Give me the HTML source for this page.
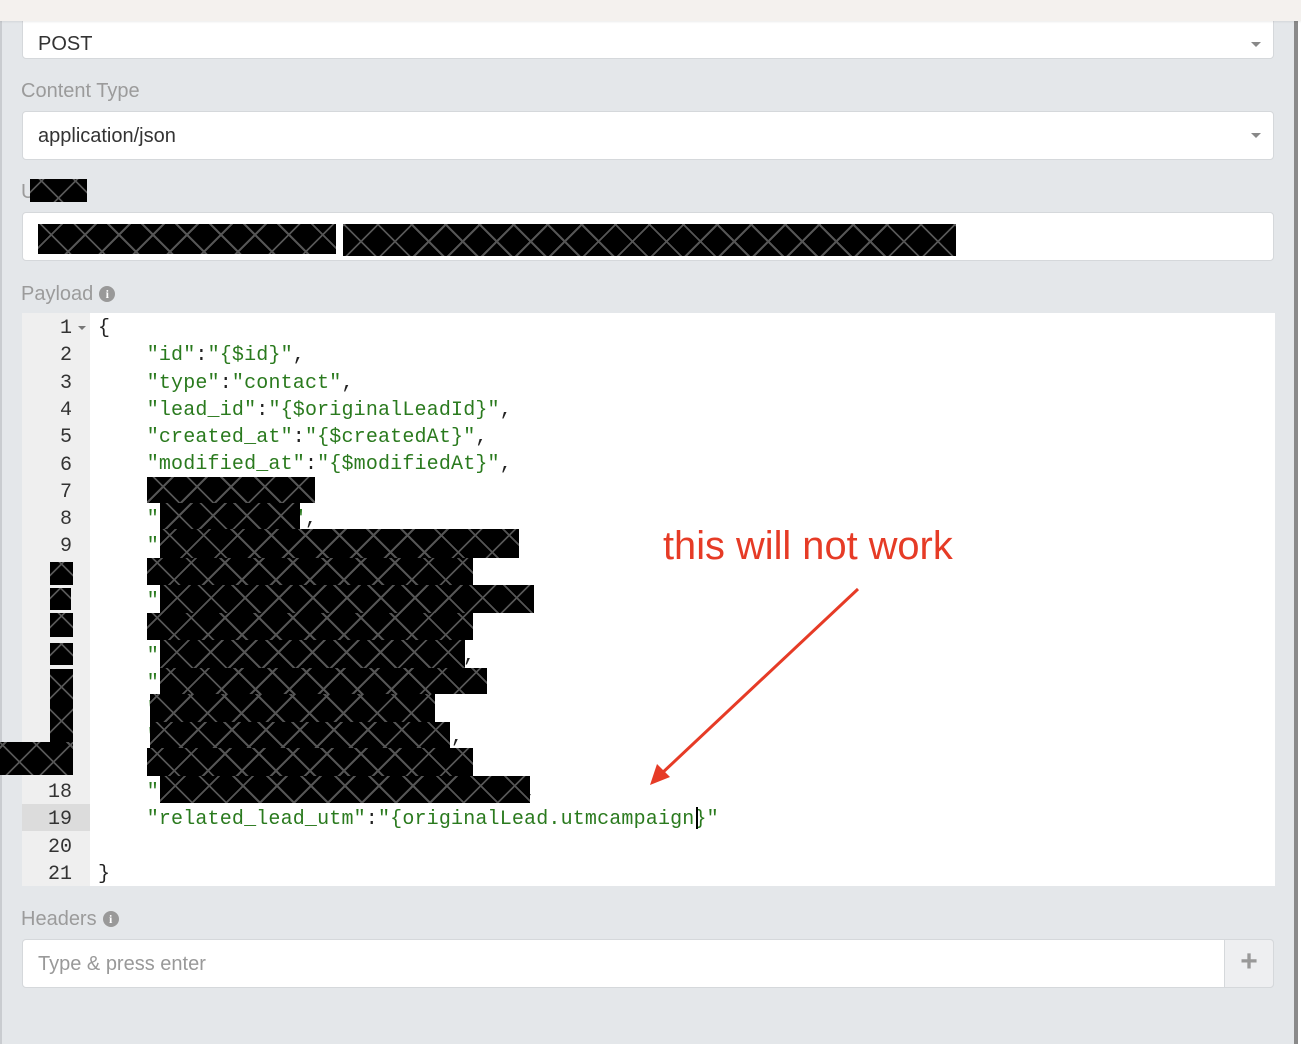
<!DOCTYPE html>
<html><head><meta charset="utf-8"><style>
*{box-sizing:border-box;margin:0;padding:0}
body{width:1301px;height:1044px;background:#e4e7ea;position:relative;overflow:hidden;font-family:"Liberation Sans",sans-serif}
.top{position:absolute;left:0;top:0;width:1301px;height:21px;background:#f4f1ee;z-index:5;box-shadow:0 1px 2px rgba(0,0,0,.08)}
.rb{position:absolute;left:1294px;top:21px;width:4px;height:1023px;background:#8a8a8a}
.rw{position:absolute;left:1298px;top:21px;width:3px;height:1023px;background:#fff}
.lb{position:absolute;left:0;top:21px;width:2px;height:1023px;background:#c9ccd0}
.box{position:absolute;left:22px;width:1252px;height:49px;background:#fff;border:1px solid #d5d8db;border-radius:4px;font-size:20px;color:#333;padding:12px 15px;line-height:24px}
.caret{position:absolute;right:12px;top:21px;border-left:5px solid transparent;border-right:5px solid transparent;border-top:5px solid #888}
.lbl{position:absolute;left:21px;font-size:20px;color:#9b9b9b}
.i{display:inline-block;width:16px;height:16px;border-radius:50%;background:#999;color:#fff;font-size:12px;font-weight:bold;text-align:center;line-height:16px;vertical-align:2px;margin-left:6px;font-family:"Liberation Serif",serif}
.ed{position:absolute;left:22px;top:313px;width:1253px;height:573px;background:#fff}
.gut{position:absolute;left:0;top:0;width:68px;height:573px;background:#efefef}
.ln{position:absolute;left:0;width:50px;text-align:right;font:20px/27.3px "Liberation Mono",monospace;color:#333;margin-top:2px}
.code{position:absolute;left:76px;top:2px;font:20px/27.3px "Liberation Mono",monospace;letter-spacing:0.17px;color:#2a7a1e;white-space:pre}
.k{color:#222}
.r{position:absolute;background-color:#000;background-image:repeating-linear-gradient(45deg,transparent 0 22px,#555 22px 24px),repeating-linear-gradient(-45deg,transparent 0 22px,#555 22px 24px);z-index:3}
</style></head><body>
<div class="top"></div><div class="lb"></div><div class="rb"></div><div class="rw"></div>
<div class="box" style="top:10px;padding-top:21px">POST<div class="caret" style="top:31px"></div></div>
<div class="lbl" style="top:80px">Content Type</div>
<div class="box" style="top:111px">application/json<div class="caret"></div></div>
<div class="lbl" style="top:181px">U<span class="i">i</span></div>
<div class="r" style="left:30px;top:179px;width:57px;height:23px"></div>
<div class="box" style="top:212px"></div>
<div class="r" style="left:38px;top:224px;width:298px;height:30px"></div>
<div class="r" style="left:343px;top:224px;width:613px;height:32px"></div>
<div class="lbl" style="top:283px">Payload<span class="i">i</span></div>
<div class="ed">
<div class="gut"></div>
<div style="position:absolute;left:0;top:491px;width:68px;height:27px;background:#dcdcdc"></div>
<div class="ln" style="top:0">1</div><div style="position:absolute;left:56px;top:13px;border-left:4px solid transparent;border-right:4px solid transparent;border-top:4px solid #777"></div>
<div class="ln" style="top:27.3px">2</div><div class="ln" style="top:54.6px">3</div><div class="ln" style="top:81.9px">4</div><div class="ln" style="top:109.2px">5</div><div class="ln" style="top:136.5px">6</div><div class="ln" style="top:163.8px">7</div><div class="ln" style="top:191.1px">8</div><div class="ln" style="top:218.4px">9</div>
<div class="ln" style="top:464px">18</div><div class="ln" style="top:491.4px">19</div><div class="ln" style="top:518.7px">20</div><div class="ln" style="top:546px">21</div>
<div class="code"><span class="k">{</span>
    "id"<span class="k">:</span>"{$id}"<span class="k">,</span>
    "type"<span class="k">:</span>"contact"<span class="k">,</span>
    "lead_id"<span class="k">:</span>"{$originalLeadId}"<span class="k">,</span>
    "created_at"<span class="k">:</span>"{$createdAt}"<span class="k">,</span>
    "modified_at"<span class="k">:</span>"{$modifiedAt}"<span class="k">,</span>
              <span class="k">,</span>
    "           "<span class="k">,</span>
    "
                          <span class="k">,</span>
    "
                          <span class="k">,</span>
    "                        "<span class="k">,</span>
    "                         "<span class="k">,</span>
    "
    "                        <span class="k">,</span>
                          <span class="k">,</span>
    "                              <span class="k">,</span>
    "related_lead_utm"<span class="k">:</span>"{originalLead.utmcampaign}"

<span class="k">}</span></div>
<div style="position:absolute;left:674px;top:494px;width:2px;height:22px;background:#000"></div>
</div>
<div class="r" style="left:147px;top:477px;width:168px;height:26px"></div>
<div class="r" style="left:160px;top:503px;width:140px;height:26px"></div>
<div class="r" style="left:160px;top:529px;width:359px;height:29px"></div>
<div class="r" style="left:147px;top:558px;width:326px;height:27px"></div>
<div class="r" style="left:160px;top:585px;width:374px;height:28px"></div>
<div class="r" style="left:147px;top:613px;width:326px;height:27px"></div>
<div class="r" style="left:160px;top:640px;width:305px;height:28px"></div>
<div class="r" style="left:160px;top:668px;width:327px;height:26px"></div>
<div class="r" style="left:150px;top:694px;width:285px;height:28px"></div>
<div class="r" style="left:150px;top:722px;width:300px;height:26px"></div>
<div class="r" style="left:147px;top:748px;width:326px;height:28px"></div>
<div class="r" style="left:160px;top:776px;width:370px;height:27px"></div>
<div class="r" style="left:50px;top:562px;width:23px;height:23px"></div>
<div class="r" style="left:50px;top:588px;width:21px;height:22px"></div>
<div class="r" style="left:50px;top:613px;width:23px;height:24px"></div>
<div class="r" style="left:50px;top:643px;width:23px;height:22px"></div>
<div class="r" style="left:50px;top:669px;width:23px;height:73px"></div>
<div class="r" style="left:0;top:742px;width:73px;height:33px"></div>
<div style="position:absolute;left:663px;top:524px;font-size:39.8px;color:#e63b26;white-space:nowrap">this will not work</div>
<svg style="position:absolute;left:0;top:0" width="1301" height="1044"><line x1="858" y1="589" x2="660" y2="775" stroke="#e63b26" stroke-width="3"/><polygon points="650,785 657,764 670,777" fill="#e63b26"/></svg>
<div class="lbl" style="top:908px">Headers<span class="i">i</span></div>
<div class="box" style="top:939px;color:#999">Type &amp; press enter</div>
<div style="position:absolute;left:1224px;top:939px;width:50px;height:49px;background:#eeeff1;border:1px solid #d5d8db;border-radius:0 4px 4px 0;color:#999;font-size:30px;text-align:center;line-height:44px;font-weight:bold">+</div>
</body></html>
